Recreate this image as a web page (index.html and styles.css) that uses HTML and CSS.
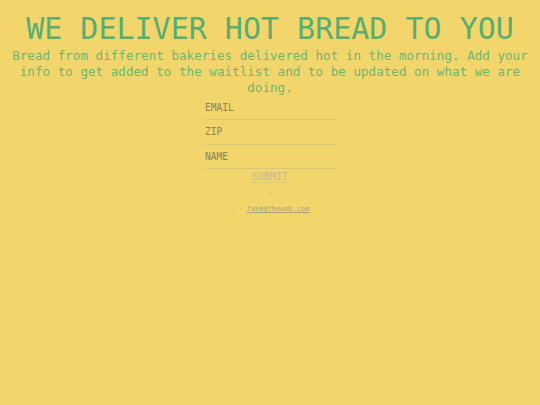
FILE: index.html
```html
<!DOCTYPE html>
<html>
<head>
<meta charset="utf-8">
<link rel="stylesheet" href="styles.css">
</head>
<body>
<main class="page">
  <h1 class="title">WE DELIVER HOT BREAD TO YOU</h1>
  <p class="lead">Bread from different bakeries delivered hot in the morning. Add your info to get added to the waitlist and to be updated on what we are doing.</p>
  <form class="form">
    <input class="field" type="text" placeholder="EMAIL">
    <input class="field" type="text" placeholder="ZIP">
    <input class="field" type="text" placeholder="NAME">
    <button class="submit" type="button">SUBMIT</button>
  </form>
  <div class="sep">-</div>
  <div class="foot">- - <a class="mail" href="#">fake@theweb.com</a></div>
</main>
</body>
</html>
```
FILE: styles.css
```css
html, body {
  margin: 0;
  padding: 0;
  background: #f3d66b;
}
body {
  font-family: "DejaVu Sans Mono", monospace;
}
.page {
  display: flex;
  flex-direction: column;
  align-items: center;
  text-align: center;
}
.title {
  margin: 14px 0 0;
  font-size: 30px;
  line-height: 30px;
  font-weight: normal;
  color: #5aad70;
}
.lead {
  margin: 4px 0 0;
  width: 530px;
  font-size: 12.6px;
  line-height: 16px;
  color: #6fb571;
}
.form {
  display: flex;
  flex-direction: column;
  align-items: center;
  width: 132px;
}
.field {
  box-sizing: border-box;
  width: 132px;
  height: 24.3px;
  margin: 0;
  padding: 0 1px 0;
  border: 0;
  border-bottom: 1px solid #d6ca7c;
  background: transparent;
  font-family: "DejaVu Sans Mono", monospace;
  font-size: 9.6px;
  color: #857c55;
  outline: none;
}
.field::placeholder {
  color: #8a8259;
}
.submit {
  margin: 2px 0 0;
  padding: 0 3px;
  border: 0;
  border-bottom: 1px solid #d6ca7c;
  background: transparent;
  font-family: "DejaVu Sans Mono", monospace;
  font-size: 10px;
  line-height: 11px;
  color: #c6b98c;
}
.sep {
  margin-top: 6px;
  font-size: 8px;
  line-height: 10px;
  color: #b5a475;
}
.foot {
  margin-top: 5px;
  font-size: 7px;
  line-height: 10px;
  color: #b4a77c;
}
.mail {
  margin-left: -1px;
  color: #aa9f7c;
  text-decoration: underline;
}
```
